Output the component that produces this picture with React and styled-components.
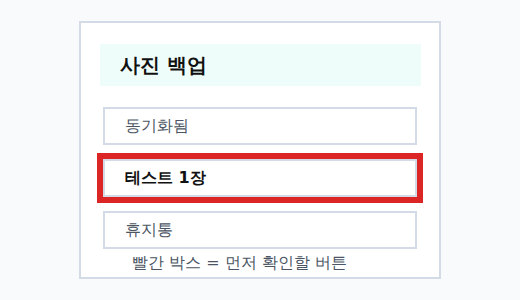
import React from "react";
import styled, { createGlobalStyle } from "styled-components";

const GlobalStyle = createGlobalStyle`
  html, body {
    margin: 0;
    padding: 0;
    background: #f8fafc;
  }
  body {
    font-family: "DejaVu Sans", sans-serif;
  }
`;

const Page = styled.div`
  padding-top: 21px;
  display: flex;
  justify-content: center;
`;

const Panel = styled.section`
  width: 321px;
  background: #ffffff;
  border: 2px solid #d3dbe7;
  padding: 21px 18px 2px 19px;
  display: flex;
  flex-direction: column;
`;

const Header = styled.h1`
  margin: 0;
  height: 42px;
  background: #effdfa;
  display: flex;
  align-items: center;
  padding-left: 20px;
  font-size: 20px;
  font-weight: 700;
  color: #111111;
`;

const List = styled.div`
  display: flex;
  flex-direction: column;
  gap: 14px;
  margin-top: 21px;
  padding: 0 4px 0 3px;
`;

const ItemButton = styled.button`
  box-sizing: border-box;
  height: 38px;
  width: 100%;
  margin: 0;
  background: #ffffff;
  border: 2px solid #d3dbe7;
  border-radius: 0;
  display: flex;
  align-items: center;
  padding: 0 0 0 20px;
  font-family: "DejaVu Sans", sans-serif;
  font-size: 16px;
  font-weight: ${(p) => (p.$primary ? 700 : 400)};
  color: ${(p) => (p.$primary ? "#111111" : "#4b5563")};
  outline: ${(p) => (p.$primary ? "6px solid #dc2626" : "none")};
  cursor: pointer;
`;

const Caption = styled.p`
  margin: 2px 0 0;
  padding-left: 32px;
  font-size: 16px;
  line-height: 24px;
  color: #4b5563;
`;

export default function App() {
  return (
    <>
      <GlobalStyle />
      <Page>
        <Panel>
          <Header>사진 백업</Header>
          <List>
            <ItemButton>동기화됨</ItemButton>
            <ItemButton $primary>테스트 1장</ItemButton>
            <ItemButton>휴지통</ItemButton>
          </List>
          <Caption>빨간 박스 = 먼저 확인할 버튼</Caption>
        </Panel>
      </Page>
    </>
  );
}
